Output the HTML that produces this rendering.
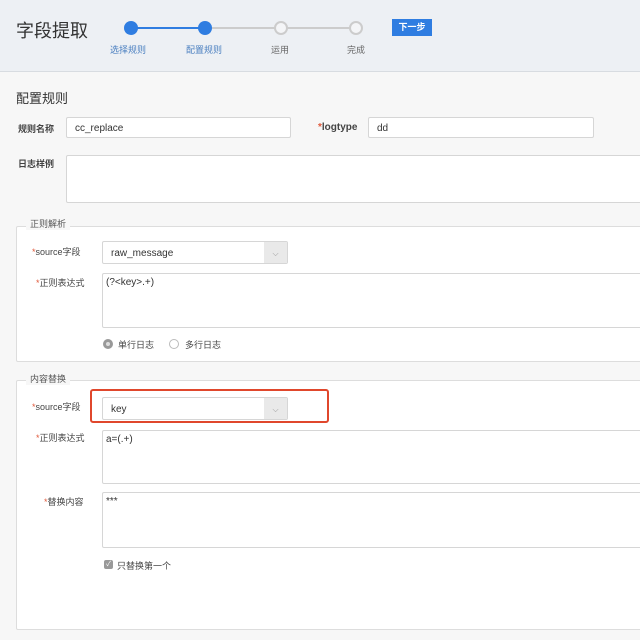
<!DOCTYPE html><html><head><style>
*{box-sizing:border-box;margin:0;padding:0}
body{width:640px;height:640px;overflow:hidden;background:#f7f7f7;font-family:"Liberation Sans","Noto Sans CJK SC",sans-serif;position:relative;color:#333}
.a{position:absolute}
.hdr{left:0;top:0;width:640px;height:72px;background:#edf0f4;border-bottom:1px solid #d8dce1}
.in{position:absolute;background:#fff;border:1px solid #d6d6d6;border-radius:2px;font-size:10px;padding-left:8px;color:#333}
.ta{padding-left:3px;padding-top:3px}
.lb{position:absolute;font-size:9px;color:#444}
.st{color:#e05a3c}
.fs{position:absolute;border:1px solid #ddd;background:#fff;border-radius:2px}
.lg{position:absolute;font-size:9px;color:#555;background:#f7f7f7;padding:0 4px}
.arr{position:absolute;right:0;top:0;width:23px;height:100%;background:#e9e9e9;font-size:8px;color:#999;text-align:center}
</style></head><body>
<div class="a hdr"></div>
<div class="a" style="left:16px;top:17px;font-size:18px;color:#333">字段提取</div>
<div class="a" style="left:131px;top:27px;width:74px;height:2px;background:#2f7de1"></div>
<div class="a" style="left:205px;top:27px;width:151px;height:2px;background:#ccc"></div>
<div class="a" style="left:124px;top:21px;width:14px;height:14px;border-radius:50%;background:#2f7de1"></div>
<div class="a" style="left:198px;top:21px;width:14px;height:14px;border-radius:50%;background:#2f7de1"></div>
<div class="a" style="left:274px;top:21px;width:14px;height:14px;border-radius:50%;background:#f4f5f7;border:2px solid #ccc"></div>
<div class="a" style="left:349px;top:21px;width:14px;height:14px;border-radius:50%;background:#f4f5f7;border:2px solid #ccc"></div>
<div class="a" style="left:110px;top:43px;font-size:9px;color:#4a7fc0">选择规则</div>
<div class="a" style="left:186px;top:43px;font-size:9px;color:#4a7fc0">配置规则</div>
<div class="a" style="left:271px;top:43px;font-size:9px;color:#666">运用</div>
<div class="a" style="left:347px;top:43px;font-size:9px;color:#666">完成</div>
<div class="a" style="left:392px;top:19px;width:40px;height:17px;background:#2f7de1;color:#fff;font-size:9px;text-align:center;line-height:17px;font-weight:bold">下一步</div>
<div class="a" style="left:16px;top:88px;font-size:13px;color:#333">配置规则</div>
<div class="lb" style="left:18px;top:122px;font-weight:bold">规则名称</div>
<div class="in" style="left:66px;top:117px;width:225px;height:21px;line-height:21px">cc_replace</div>
<div class="lb" style="left:318px;top:122px;font-weight:bold;font-size:10px"><span class="st">*</span>logtype</div>
<div class="in" style="left:368px;top:117px;width:226px;height:21px;line-height:21px">dd</div>
<div class="lb" style="left:18px;top:157px;font-weight:bold">日志样例</div>
<div class="in" style="left:66px;top:155px;width:580px;height:48px"></div>
<div class="fs" style="left:16px;top:226px;width:640px;height:136px"></div>
<div class="lg" style="left:26px;top:217px">正则解析</div>
<div class="lb" style="left:32px;top:245px"><span class="st">*</span>source字段</div>
<div class="in" style="left:102px;top:241px;width:186px;height:23px;line-height:24px">raw_message<div class="arr">⌵</div></div>
<div class="lb" style="left:36px;top:276px"><span class="st">*</span>正则表达式</div>
<div class="in ta" style="left:102px;top:273px;width:545px;height:55px">(?&lt;key&gt;.+)</div>
<div class="a" style="left:103px;top:339px;width:10px;height:10px;border-radius:50%;background:#ddd;border:3px solid #999"></div>
<div class="lb" style="left:118px;top:338px">单行日志</div>
<div class="a" style="left:169px;top:339px;width:10px;height:10px;border-radius:50%;border:1px solid #bbb;background:#fff"></div>
<div class="lb" style="left:185px;top:338px">多行日志</div>
<div class="fs" style="left:16px;top:380px;width:640px;height:250px"></div>
<div class="lg" style="left:26px;top:372px">内容替换</div>
<div class="a" style="left:90px;top:389px;width:239px;height:34px;border:2px solid #e0472c;border-radius:3px"></div>
<div class="lb" style="left:32px;top:400px"><span class="st">*</span>source字段</div>
<div class="in" style="left:102px;top:397px;width:186px;height:23px;line-height:24px">key<div class="arr">⌵</div></div>
<div class="lb" style="left:36px;top:431px"><span class="st">*</span>正则表达式</div>
<div class="in ta" style="left:102px;top:430px;width:545px;height:54px">a=(.+)</div>
<div class="lb" style="left:44px;top:495px"><span class="st">*</span>替换内容</div>
<div class="in ta" style="left:102px;top:492px;width:545px;height:56px">***</div>
<div class="a" style="left:104px;top:560px;width:9px;height:9px;background:#999;border-radius:2px;color:#fff;font-size:7px;line-height:9px;text-align:center">✓</div>
<div class="lb" style="left:117px;top:559px">只替换第一个</div>
</body></html>
